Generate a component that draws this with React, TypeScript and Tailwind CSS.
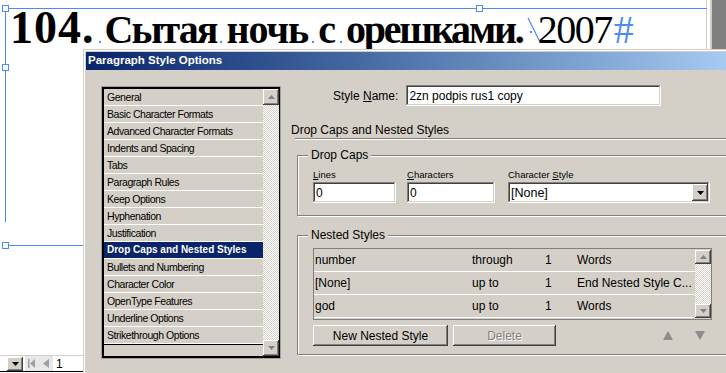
const raised =
  "shadow-[inset_-1px_-1px_#404040,inset_1px_1px_#ffffff,inset_-2px_-2px_#808080,inset_2px_2px_#d4d0c8]";
const sunken =
  "shadow-[inset_-1px_-1px_#ffffff,inset_1px_1px_#808080,inset_-2px_-2px_#d4d0c8,inset_2px_2px_#404040]";
const checker =
  "bg-[repeating-conic-gradient(#ffffff_0_25%,#d4d0c8_0_50%)] bg-[length:2px_2px]";

const ITEMS = [
  "General",
  "Basic Character Formats",
  "Advanced Character Formats",
  "Indents and Spacing",
  "Tabs",
  "Paragraph Rules",
  "Keep Options",
  "Hyphenation",
  "Justification",
  "Drop Caps and Nested Styles",
  "Bullets and Numbering",
  "Character Color",
  "OpenType Features",
  "Underline Options",
  "Strikethrough Options",
];

const NESTED = [
  { style: "number", how: "through", n: "1", unit: "Words" },
  { style: "[None]", how: "up to", n: "1", unit: "End Nested Style C..." },
  { style: "god", how: "up to", n: "1", unit: "Words" },
];

interface ITri {
  up?: boolean;
  color?: string;
}

const Tri = ({ up, color = "#808080" }: ITri) => (
  <svg width="7" height="4" viewBox="0 0 7 4">
    <path d={up ? "M3.5 0L7 4H0z" : "M0 0h7L3.5 4z"} fill={color} />
  </svg>
);

const ScrollBar = ({ btn }: { btn: number }) => (
  <div className={`flex h-full w-[16px] shrink-0 flex-col ${checker}`}>
    <div
      style={{ height: btn }}
      className={`flex w-[16px] items-center justify-center bg-[#d4d0c8] ${raised}`}
    >
      <Tri up />
    </div>
    <div className="flex-1" />
    <div
      style={{ height: btn }}
      className={`flex w-[16px] items-center justify-center bg-[#d4d0c8] ${raised}`}
    >
      <Tri />
    </div>
  </div>
);

const Dot = () => (
  <span className="mx-[4px] mb-[10px] inline-block h-[2px] w-[2px] bg-[#4a8cf7]" />
);

const Handle = ({ cls }: { cls: string }) => (
  <div
    className={`absolute h-[7px] w-[7px] border border-[#4a8cf7] bg-white ${cls}`}
  />
);

const Field = ({ w, value }: { w: string; value: string }) => (
  <div
    className={`flex h-[21px] shrink-0 items-center bg-white pl-[3px] text-[12px] text-black ${sunken} ${w}`}
  >
    {value}
  </div>
);

const GroupBox = ({
  title,
  children,
  cls,
}: {
  title: string;
  children: React.ReactNode;
  cls: string;
}) => (
  <div
    className={`relative w-[440px] shrink-0 border border-[#808080] shadow-[1px_1px_0_#ffffff,inset_1px_1px_0_#ffffff] ${cls}`}
  >
    <span className="absolute -top-[8px] left-[10px] bg-[#d4d0c8] px-[3px] text-[12px] leading-[14px] text-black">
      {title}
    </span>
    {children}
  </div>
);

const Dialog = () => (
  <div className="absolute bottom-0 left-[83px] right-0 top-[49px] border-l border-t border-[#d4d0c8]">
    <div className="flex h-full flex-col border-l border-t border-white bg-[#d4d0c8] pl-px pt-px">
      <div className="flex h-[18px] items-center bg-gradient-to-r from-[#0a246a] to-[#a6caf0] pl-[2px] text-[11.5px] font-bold text-white">
        Paragraph Style Options
      </div>
      <div className="flex flex-1 items-start pl-[15px] pt-[15px]">
        <div className="mt-px h-[273px] w-[180px] shrink-0 border border-[#a0a0a0]">
          <div className="flex h-full border-2 border-r border-black bg-[#d4d0c8]">
            <div className="flex min-w-0 flex-1 flex-col">
              {ITEMS.map((item) =>
                item === "Drop Caps and Nested Styles" ? (
                  <div
                    key={item}
                    className="h-[17px] whitespace-nowrap border-b border-white bg-[#0a246a] pl-[3px] text-[10px] font-bold leading-[16px] text-white"
                  >
                    {item}
                  </div>
                ) : (
                  <div
                    key={item}
                    className="h-[17px] whitespace-nowrap border-b border-white pl-[3px] text-[10.5px] leading-[16px] tracking-[-0.45px] text-black"
                  >
                    {item}
                  </div>
                )
              )}
              <div className="flex-1 border-t border-black" />
            </div>
            <ScrollBar btn={16} />
          </div>
        </div>

        <div className="ml-[10px] flex w-[440px] shrink-0 flex-col">
          <div className="flex items-center">
            <span className="ml-[42px] mr-[8px] text-[12px] text-black">
              Style <u>N</u>ame:
            </span>
            <Field w="w-[255px]" value="2zn podpis rus1 copy" />
          </div>

          <div className="mt-[17px] text-[12px] leading-[14px] text-black">
            Drop Caps and Nested Styles
          </div>
          <div className="ml-[4px] mt-px h-[2px] border-t border-[#808080] border-b border-b-white" />

          <GroupBox title="Drop Caps" cls="ml-[6px] mt-[15px] h-[61px]">
            <div className="flex items-start pl-[15px] pt-[13px] text-[9.5px] leading-[12px] text-black">
              <div className="flex w-[94px] flex-col gap-px">
                <span>
                  <u>L</u>ines
                </span>
                <Field w="w-[83px]" value="0" />
              </div>
              <div className="flex w-[101px] flex-col gap-px">
                <span>
                  <u>C</u>haracters
                </span>
                <Field w="w-[88px]" value="0" />
              </div>
              <div className="flex flex-col gap-px">
                <span>
                  Character <u>S</u>tyle
                </span>
                <div
                  className={`flex h-[21px] w-[202px] items-center bg-white pl-[3px] pr-[2px] text-[12.5px] text-black ${sunken}`}
                >
                  <span className="flex-1">[None]</span>
                  <div
                    className={`flex h-[17px] w-[16px] items-center justify-center bg-[#d4d0c8] ${raised}`}
                  >
                    <Tri color="#000000" />
                  </div>
                </div>
              </div>
            </div>
          </GroupBox>

          <GroupBox title="Nested Styles" cls="ml-[6px] mt-[19px] h-[120px]">
            <div className="pl-[15px] pt-[12px]">
              <div className="flex h-[72px] w-[399px] border border-[#808080] bg-[#d4d0c8]">
                <div className="flex flex-1 flex-col">
                  {NESTED.map((r) => (
                    <div
                      key={r.style}
                      className="flex h-[23px] items-center border-b border-white text-[12px] text-black"
                    >
                      <span className="w-[158px] pl-px">{r.style}</span>
                      <span className="w-[73px]">{r.how}</span>
                      <span className="w-[32px]">{r.n}</span>
                      <span className="whitespace-nowrap">{r.unit}</span>
                    </div>
                  ))}
                </div>
                <div className="py-px">
                  <ScrollBar btn={14} />
                </div>
              </div>
              <div className="mt-[5px] flex items-center">
                <div
                  className={`flex h-[21px] w-[135px] items-center justify-center bg-[#d4d0c8] text-[12px] text-black ${raised}`}
                >
                  New Nested Style
                </div>
                <div
                  className={`ml-[5px] flex h-[21px] w-[103px] items-center justify-center bg-[#d4d0c8] text-[12px] text-[#808080] [text-shadow:1px_1px_0_#ffffff] ${raised}`}
                >
                  Delete
                </div>
                <svg className="ml-[107px]" width="10" height="9" viewBox="0 0 10 9">
                  <path d="M5 0L10 9H0z" fill="#8c8c8c" />
                </svg>
                <svg className="ml-[22px]" width="10" height="9" viewBox="0 0 10 9">
                  <path d="M0 0h10L5 9z" fill="#8c8c8c" />
                </svg>
              </div>
            </div>
          </GroupBox>
        </div>
      </div>
    </div>
  </div>
);

const App = () => {
  return (
    <div className="relative flex h-[373px] w-[726px] flex-col overflow-hidden bg-white pb-px font-['Liberation_Sans',Arial,sans-serif]">
      <div className="flex flex-1">
        <div className="relative flex-1 bg-white">
          <div className="flex items-baseline whitespace-nowrap pl-[10px] pt-[8px] font-['Liberation_Serif',serif] text-[40px] leading-[40px] text-black">
            <span className="text-[46px] font-bold tracking-[1px]">104.</span>
            <Dot />
            <span className="font-bold tracking-[-2px]">Сытая</span>
            <Dot />
            <span className="font-bold tracking-[-1px]">ночь</span>
            <Dot />
            <span className="font-bold">с</span>
            <Dot />
            <span className="font-bold tracking-[-2.2px]">орешками.</span>
            <svg className="ml-[4px]" width="14" height="26" viewBox="0 0 14 26">
              <path d="M1 1L13 25" stroke="#4a8cf7" strokeWidth="1.3" fill="none" />
              <rect x="3" y="14" width="2" height="2" fill="#4a8cf7" />
            </svg>
            <span className="-ml-[3px] tracking-[-1.5px]">2007</span>
            <span className="ml-[2px] text-[#4a8cf7]">#</span>
          </div>
          <div className="absolute left-[5px] top-[8px] h-px w-[702px] bg-[#4a8cf7]" />
          <div className="absolute left-[5px] top-[8px] h-[214px] w-px bg-[#4a8cf7]" />
          <div className="absolute left-[5px] right-0 top-[245px] h-px bg-[#4a8cf7]" />
          <Handle cls="left-[2px] top-[5px]" />
          <Handle cls="left-[2px] top-[64px]" />
          <Handle cls="left-[2px] top-[242px]" />
          <Handle cls="left-[476px] top-[5px]" />
        </div>
        <div className="w-[6px] border-l border-r-2 border-[#d4d0c8] bg-white" />
        <div className="w-[14px] bg-[#808080]" />
      </div>

      <div className="flex h-[17px] items-center border-b border-t border-[#d0d0d0] border-b-black">
        <div
          className={`ml-[7px] flex h-[14px] w-[16px] items-center justify-center bg-[#d4d0c8] ${raised}`}
        >
          <Tri color="#000000" />
        </div>
        <div className="ml-[2px] flex h-full w-[28px] items-center gap-[8px] bg-[#e8e8e8] pl-[3px]">
          <svg width="7" height="9" viewBox="0 0 7 9">
            <rect x="0" y="0" width="1.5" height="9" fill="#a0a0a0" />
            <path d="M7 0v9L2 4.5z" fill="#a0a0a0" />
          </svg>
          <svg width="6" height="9" viewBox="0 0 6 9">
            <path d="M6 0v9L0 4.5z" fill="#a0a0a0" />
          </svg>
        </div>
        <span className="ml-[3px] text-[12px] text-black">1</span>
      </div>

      <Dialog />
    </div>
  );
};

export default App;
